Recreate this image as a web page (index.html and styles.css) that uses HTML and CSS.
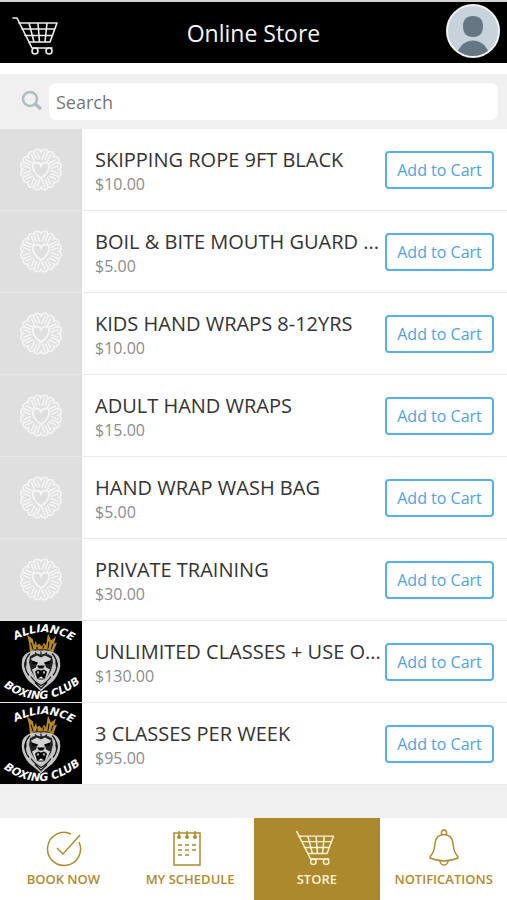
FILE: index.html
```html
<!DOCTYPE html>
<html lang="en">
<head>
    <meta charset="UTF-8">
    <meta name="viewport" content="width=device-width, initial-scale=1.0">
    <title>Online Store</title>
    <link rel="stylesheet" href="styles.css">
</head>
<body>
    <!-- shared icons -->
    <svg class="sprite" aria-hidden="true">
        <symbol id="cart" viewBox="0 0 46 38">
            <g fill="none" stroke="currentColor" stroke-width="1.6" stroke-linecap="round" stroke-linejoin="round">
                <path d="M1 1h4l15 30h20"/>
                <path d="M7 6h38l-7 19H17M10 12h33M13 18.500h27.500M17 6l5 19M26 6l1.500 19M35 6l-2 19"/>
                <circle cx="23" cy="34" r="3"/>
                <circle cx="37" cy="34" r="3"/>
            </g>
        </symbol>
        <symbol id="medal" viewBox="0 0 82 82">
            <g fill="none" stroke="#f5f5f5" stroke-width="1.700">
                <g id="petals">
                    <path id="petal" d="M34 25C33 19 40 20 41 23C42 20 49 19 48 25M37 23L40 31M45 23L42 31M34 25L37 31"/>
                    <use href="#petal" transform="rotate(45 41 41)"/>
                    <use href="#petal" transform="rotate(90 41 41)"/>
                    <use href="#petal" transform="rotate(135 41 41)"/>
                </g>
                <use href="#petals" transform="rotate(180 41 41)"/>
            </g>
            <path d="M41 50C31 43 31 34 36 34Q40 34 41 37Q42 34 46 34C51 34 51 43 41 50Z" fill="#dfdfdf" stroke="#f5f5f5" stroke-width="2"/>
        </symbol>
        <symbol id="club" viewBox="0 0 82 82" preserveAspectRatio="xMidYMid slice">
            <rect width="82" height="82" fill="#000"/>
            <path id="arcTop" d="M12 22Q43 1 76 23" fill="none"/>
            <path id="arcBottom" d="M0 63Q41 96 84 59" fill="none"/>
            <g class="club-text">
                <text><textPath href="#arcTop" startOffset="50%">ALLIANCE</textPath></text>
                <text><textPath href="#arcBottom" startOffset="50%">BOXING CLUB</textPath></text>
            </g>
            <path d="M30 32L29 22L27 14L33 19L34 25L36 20L37 25L39 23L42 26L44 22L46 25L48 13L51 20L56 16L54 23L57 22L53 32L48 29L41 29L35 29Z" fill="#b88a23"/>
            <path d="M33 29l-2-7M37 29v-3M43 28l1-3M48 28l1-7M51 29l2-6" stroke="#000" fill="none"/>
            <path d="M41 30Q33 29 28 32Q22 35 22 41Q21 47 24 53Q27 60 33 64Q37 67 41 71Q45 67 49 64Q55 60 58 53Q61 47 60 41Q60 35 54 32Q48 29 41 30Z" fill="#c4c4c4"/>
            <g fill="none" stroke="#151515" stroke-width="1.200">
                <path d="M30 33Q25 38 26 43Q24 49 29 55M27 37Q23 43 26 49M52 33Q57 38 56 43Q58 49 53 55M55 37Q59 43 56 49"/>
                <path d="M31 56Q34 61 41 65Q48 61 51 56M35 62L41 68L47 62M35 32L38 35M47 32L44 35M41 31V37"/>
            </g>
            <path d="M41 34Q34 32 30 36L29 42L31 50L35 57Q41 64 47 57L51 50L53 42L52 36Q48 32 41 34Z" fill="#222"/>
            <path d="M31 38L37 35L41 37L45 35L51 38L49 42L45 43L46 47L50 49L47 57L43 61H39L35 57L32 49L36 47L37 43L33 42Z" fill="#d2d2d2"/>
            <path d="M32 40L38 42L37 44L32 43ZM50 40L44 42L45 44L50 43ZM37 45H45L43 48H39Z" fill="#000"/>
            <path d="M35 51L38 49L41 50L44 49L47 51L45 58L43 59H39L37 58Z" fill="#080808"/>
            <path d="M37 51l1 3 1-3M43 51l1 3 1-3M38 58l3-2 3 2" fill="#fff"/>
        </symbol>
    </svg>

    <header class="topbar">
        <a href="#cart-page" class="cart-link" aria-label="Cart"><svg><use href="#cart"/></svg></a>
        <h1>Online Store</h1>
        <a href="#profile" class="avatar" aria-label="Profile">
            <svg viewBox="0 0 54 54">
                <circle cx="27" cy="27" r="26" fill="#c8d2db" stroke="#f2f5f7" stroke-width="2"/>
                <path d="M27 12C34 12 37 16 37 22C37 29 34 33 27 33C20 33 17 29 17 22C17 16 20 12 27 12Z" fill="#667783"/>
                <path d="M12 47C18 33 36 33 42 47Q35 52 27 52Q19 52 12 47Z" fill="#667783"/>
            </svg>
        </a>
    </header>

    <form class="search">
        <label for="search" aria-label="Search">
            <svg viewBox="0 0 22 22"><circle cx="9" cy="8" r="7"/><path d="M14 13l6 5" stroke-width="3.500"/></svg>
        </label>
        <input type="search" id="search" placeholder="Search">
    </form>

    <main>
        <ul class="products">
            <li>
                <svg class="thumb"><use href="#medal"/></svg>
                <div class="info"><h2>SKIPPING ROPE 9FT BLACK</h2><p>$10.00</p></div>
                <button type="button">Add to Cart</button>
            </li>
            <li>
                <svg class="thumb"><use href="#medal"/></svg>
                <div class="info"><h2>BOIL &amp; BITE MOUTH GUARD ...</h2><p>$5.00</p></div>
                <button type="button">Add to Cart</button>
            </li>
            <li>
                <svg class="thumb"><use href="#medal"/></svg>
                <div class="info"><h2>KIDS HAND WRAPS 8-12YRS</h2><p>$10.00</p></div>
                <button type="button">Add to Cart</button>
            </li>
            <li>
                <svg class="thumb"><use href="#medal"/></svg>
                <div class="info"><h2>ADULT HAND WRAPS</h2><p>$15.00</p></div>
                <button type="button">Add to Cart</button>
            </li>
            <li>
                <svg class="thumb"><use href="#medal"/></svg>
                <div class="info"><h2>HAND WRAP WASH BAG</h2><p>$5.00</p></div>
                <button type="button">Add to Cart</button>
            </li>
            <li>
                <svg class="thumb"><use href="#medal"/></svg>
                <div class="info"><h2>PRIVATE TRAINING</h2><p>$30.00</p></div>
                <button type="button">Add to Cart</button>
            </li>
            <li>
                <svg class="thumb"><use href="#club"/></svg>
                <div class="info"><h2>UNLIMITED CLASSES + USE O...</h2><p>$130.00</p></div>
                <button type="button">Add to Cart</button>
            </li>
            <li>
                <svg class="thumb"><use href="#club"/></svg>
                <div class="info"><h2>3 CLASSES PER WEEK</h2><p>$95.00</p></div>
                <button type="button">Add to Cart</button>
            </li>
        </ul>
    </main>

    <nav>
        <a href="#book">
            <svg viewBox="0 0 42 38"><path d="M29 5A16.500 16.500 0 1 0 37 13M15 19l6 6L38 6"/></svg>
            BOOK NOW
        </a>
        <a href="#schedule">
            <svg viewBox="0 0 42 38">
                <path d="M5 4h26v32H5zM10 2v5M18 2v5M26 2v5"/>
                <path d="M9 16h4M16 16h4M23 16h4M9 21h4M16 21h4M23 21h4M9 26h4M16 26h4"/>
                <g fill="currentColor" stroke="none"><circle cx="10" cy="8" r="2"/><circle cx="18" cy="8" r="2"/><circle cx="26" cy="8" r="2"/></g>
            </svg>
            MY SCHEDULE
        </a>
        <a href="#store" class="active">
            <svg viewBox="4 0 46 38"><use href="#cart" width="46" height="38"/></svg>
            STORE
        </a>
        <a href="#notifications">
            <svg viewBox="0 0 42 38">
                <path d="M18 6C9 9 14 19 9 25Q7 27 7 29Q14 32 21 32Q28 32 35 29Q35 27 33 25C28 19 33 9 24 6Q21 5 18 6Z"/>
                <path d="M19 5a2.500 2.500 0 1 1 4 0M17 32a4 4 0 0 0 8 0"/>
            </svg>
            NOTIFICATIONS
        </a>
    </nav>
</body>
</html>
```
FILE: styles.css
```css
* {
    box-sizing: border-box;
}
body {
    font-family: "Open Sans", "Noto Sans", sans-serif;
    margin: 0;
    min-height: 100vh;
    display: flex;
    flex-direction: column;
    background-color: #f0f0f0;
    color: #333;
}
h1, h2, p, ul {
    margin: 0;
    padding: 0;
    font-weight: 400;
}
svg {
    display: block;
}
.sprite {
    position: absolute;
    width: 0;
    height: 0;
}
.topbar {
    display: grid;
    grid-template-columns: 61px 1fr 61px;
    align-items: center;
    height: 63px;
    background-color: #000;
    border-top: 2px solid #d2d2d2;
    color: #f5f5f5;
}
.topbar h1 {
    font-size: 23px;
    line-height: 30px;
    text-align: center;
}
.cart-link {
    padding: 6px 0 0 12px;
    color: #eee;
}
.cart-link svg {
    width: 46px;
    height: 38px;
}
.avatar {
    padding-bottom: 4px;
}
.avatar svg {
    width: 54px;
    height: 54px;
}
.search {
    display: flex;
    align-items: center;
    padding: 9px 9px 9px 21px;
    border-top: 11px solid #fff;
}
.search label {
    width: 28px;
}
.search svg {
    width: 22px;
    height: 22px;
    fill: none;
    stroke: #b0bdc0;
    stroke-width: 2.5;
}
.search input {
    flex: 1;
    min-width: 0;
    height: 37px;
    padding: 0 7px;
    border: none;
    border-radius: 7px;
    background-color: #fff;
    font-family: inherit;
    font-size: 18px;
    color: #333;
}
.search input::placeholder {
    color: #777;
}
main {
    flex: 1;
}
.products {
    list-style: none;
    background-color: #fff;
}
.products li {
    display: flex;
    align-items: center;
    height: 82px;
    padding-right: 13px;
    border-bottom: 1px solid #e9e9e9;
}
.thumb {
    flex: none;
    width: 82px;
    height: 81px;
    background-color: #dfdfdf;
}
.club-text {
    font-family: "DejaVu Sans", sans-serif;
    font-size: 11px;
    font-weight: 700;
    font-style: italic;
    fill: #fff;
    text-anchor: middle;
}
.info {
    flex: 1;
    min-width: 0;
    padding: 2px 0 0 13px;
}
.info h2 {
    font-size: 20px;
    line-height: 26px;
    white-space: nowrap;
}
.info p {
    font-size: 16px;
    line-height: 22px;
    color: #8c8c8c;
}
.products button {
    flex: none;
    width: 109px;
    height: 38px;
    padding: 0;
    border: 2px solid #55b1ec;
    border-radius: 4px;
    background-color: #fff;
    font-family: inherit;
    font-size: 16px;
    color: #4da3e3;
}
nav {
    display: grid;
    grid-template-columns: repeat(4, 1fr);
    height: 82px;
    background-color: #fff;
}
nav a {
    display: flex;
    flex-direction: column;
    align-items: center;
    padding-top: 11px;
    gap: 2px;
    font-size: 13px;
    line-height: 20px;
    font-weight: 600;
    color: #ae8b2d;
    text-decoration: none;
}
nav svg {
    width: 42px;
    height: 38px;
    fill: none;
    stroke: currentColor;
    stroke-width: 1.5;
}
nav .active {
    background-color: #ab892c;
    color: #fff3d6;
}
```
